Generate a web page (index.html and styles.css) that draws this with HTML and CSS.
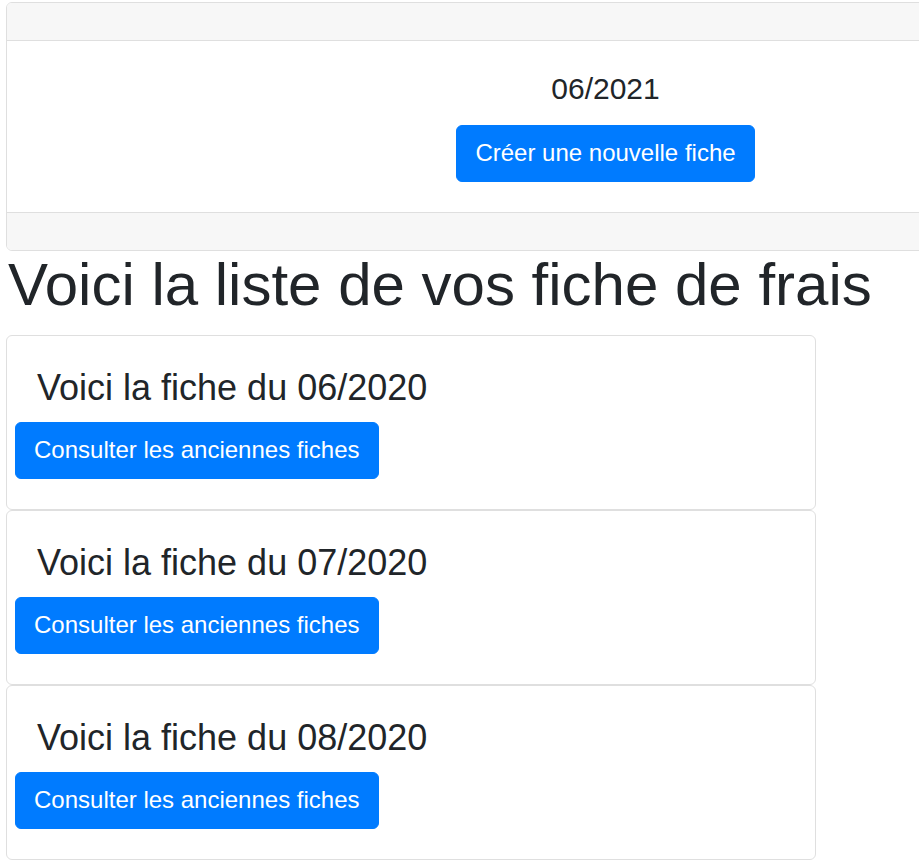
FILE: index.html
```html
<!DOCTYPE html>
<html lang="fr">
<head>
<meta charset="utf-8">
<title>Fiches de frais</title>
<link rel="stylesheet" href="styles.css">
</head>
<body>
  <div class="top-clip">
    <div class="card top-card">
      <div class="card-header"></div>
      <div class="card-body center">
        <h5 class="month">06/2021</h5>
        <a class="btn" href="#">Créer une nouvelle fiche</a>
      </div>
      <div class="card-footer"></div>
    </div>
  </div>
  <h1 class="page-title">Voici la liste de vos fiche de frais</h1>
  <div class="list">
    <div class="card item">
      <h4 class="item-title">Voici la fiche du 06/2020</h4>
      <a class="btn item-btn" href="#">Consulter les anciennes fiches</a>
    </div>
    <div class="card item">
      <h4 class="item-title">Voici la fiche du 07/2020</h4>
      <a class="btn item-btn" href="#">Consulter les anciennes fiches</a>
    </div>
    <div class="card item">
      <h4 class="item-title">Voici la fiche du 08/2020</h4>
      <a class="btn item-btn" href="#">Consulter les anciennes fiches</a>
    </div>
  </div>
</body>
</html>
```
FILE: styles.css
```css
html, body {
  margin: 0;
  padding: 0;
}
body {
  padding: 2px 0 0 6px;
  font-family: "Liberation Sans", Arial, sans-serif;
  color: #212529;
  background: #fff;
  font-size: 24px;
  line-height: 36px;
}
.top-clip {
  overflow: hidden;
}
.card {
  box-sizing: border-box;
  border: 1px solid #dfdfdf;
  border-radius: 6px;
  background: #fff;
}
.top-card {
  width: 1199px;
  overflow: hidden;
}
.card-header {
  height: 37px;
  background: #f7f7f7;
  border-bottom: 1px solid #dfdfdf;
}
.card-footer {
  height: 37px;
  background: #f7f7f7;
  border-top: 1px solid #dfdfdf;
}
.card-body {
  padding: 30px 30px 30px;
}
.center {
  display: flex;
  flex-direction: column;
  align-items: center;
}
.month {
  margin: 0 0 18px;
  font-size: 30px;
  line-height: 36px;
  font-weight: 400;
}
.btn {
  display: inline-block;
  background: #007bff;
  color: #fff;
  text-decoration: none;
  border: 1px solid #007bff;
  border-radius: 6px;
  padding: 9px 18px 10px;
  font-size: 24px;
  line-height: 36px;
}
.page-title {
  margin: 0 0 20px 2px;
  font-size: 60px;
  line-height: 60px;
  font-weight: 400;
  padding-top: 4px;
}
.list {
  width: 810px;
}
.item {
  height: 175px;
  padding: 30px 30px 0 0;
  display: flex;
  flex-direction: column;
  align-items: flex-start;
}
.item-title {
  margin: 0 0 13px 30px;
  font-size: 36px;
  line-height: 43px;
  font-weight: 400;
}
.item-btn {
  margin-left: 8px;
}
```
